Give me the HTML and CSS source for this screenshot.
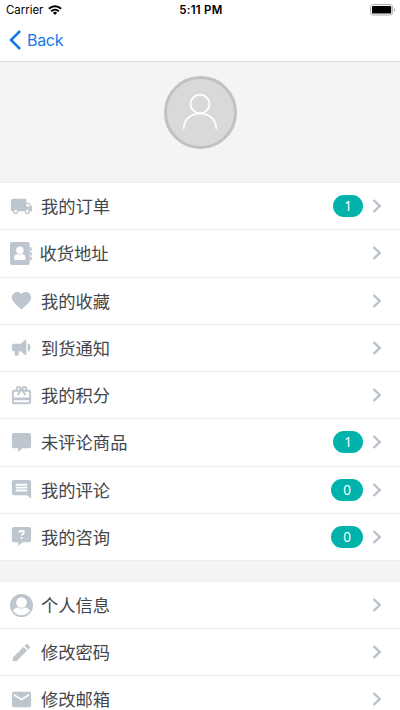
FILE: index.html
```html
<!DOCTYPE html>
<html lang="zh-CN">
<head>
<meta charset="utf-8">
<title>我的</title>
<link rel="stylesheet" href="styles.css">
</head>
<body>
<svg class="defs"><symbol id="chev" viewBox="0 0 10 14"><path d="M1.500 1 7.700 7 1.500 13" fill="none" stroke="#b8c0c9" stroke-width="2.400"/></symbol></svg>
<header>
  <div class="status">
    <div class="carrier"><span>Carrier</span>
      <svg width="14" height="10" viewBox="0 0 14 10"><g fill="none" stroke="#000" stroke-width="1.900"><path d="M.9 3.700a8.800 8.800 0 0 1 12.200 0"/><path d="M3.200 6.200a5.500 5.500 0 0 1 7.600 0"/></g><path d="M4.900 7.700a3 3 0 0 1 4.200 0L7 9.900z"/></svg>
    </div>
    <div class="time">5:11 PM</div>
    <svg class="battery" width="26" height="12" viewBox="0 0 26 12"><rect x=".6" y=".6" width="22" height="10.400" rx="2.600" fill="#fff" stroke="#aaa"/><rect x="2" y="2" width="19.200" height="7.600" rx="1.200"/><path d="M24 4.200q1.200.5 1.200 1.600T24 7.400z" fill="#999"/></svg>
  </div>
  <nav><svg width="13" height="20" viewBox="0 0 13 20"><path d="M11.100 1 2 10l9.100 9" fill="none" stroke="#147aeb" stroke-width="2.600"/></svg><span>Back</span></nav>
</header>
<section class="profile">
  <div class="avatar"><svg width="36" height="38" viewBox="0 0 36 38"><g fill="none" stroke="#fff" stroke-width="1.700"><circle cx="18" cy="11" r="9.400"/><path d="M1.800 36v-1C1.800 27 9 20.400 18 20.400s16.200 6.600 16.200 14.600v1"/></g></svg></div>
</section>
<main>
  <ul>
    <li><svg class="icon" viewBox="0 0 24 24"><path d="M20 8h-3V4H3c-1.100 0-2 .9-2 2v11h2c0 1.660 1.340 3 3 3s3-1.340 3-3h6c0 1.660 1.340 3 3 3s3-1.340 3-3h2v-5l-3-4zM6 18.500c-.83 0-1.500-.67-1.500-1.500s.67-1.500 1.500-1.500 1.500.67 1.500 1.500-.67 1.500-1.500 1.500zm13.500-9l1.960 2.500H17V9.500h2.500zm-1.500 9c-.83 0-1.500-.67-1.500-1.500s.67-1.500 1.500-1.500 1.500.67 1.500 1.500-.67 1.500-1.500 1.500z"/></svg><span class="label">我的订单</span><b class="badge one">1</b><svg class="chev"><use href="#chev"/></svg></li>
    <li><svg class="icon" viewBox="0 0 24 24"><path d="M2 0h16.500a2 2 0 0 1 2 2v20a2 2 0 0 1-2 2H2a2 2 0 0 1-2-2V2a2 2 0 0 1 2-2z"/><path d="M20.500 5.500H22q.7 0 .7.700v2q0 .8-.7.800h-1.500zM20.500 10.500H22q.7 0 .7.700v2q0 .8-.7.800h-1.500zM20.500 15.500H22q.7 0 .7.700v2q0 .8-.7.800h-1.500z"/><g fill="#fff"><circle cx="10.300" cy="8.700" r="3.900"/><path d="M4.400 18.700v-2.300c0-2.600 1.700-4 3.700-4q2.200 1.200 4.400 0c2 0 3.700 1.400 3.700 4v2.300z"/></g></svg><span class="label shift">收货地址</span><svg class="chev"><use href="#chev"/></svg></li>
    <li><svg class="icon" viewBox="0 0 24 24"><path d="M12 21.350l-1.450-1.320C5.400 15.360 2 12.280 2 8.500 2 5.420 4.420 3 7.500 3c1.740 0 3.410.81 4.500 2.090C13.090 3.810 14.760 3 16.500 3 19.580 3 22 5.420 22 8.500c0 3.780-3.400 6.860-8.550 11.540L12 21.350z"/></svg><span class="label">我的收藏</span><svg class="chev"><use href="#chev"/></svg></li>
    <li><svg class="icon" viewBox="0 0 24 24"><path d="M4 8h7l6-4.700v17.400L11 16H9v3.500q0 1-1 1H6q-1 0-1-1V16H4q-2 0-2-2v-4q0-2 2-2zM18.500 7.200q3 1.500 3 4.800t-3 4.800z"/></svg><span class="label">到货通知</span><svg class="chev"><use href="#chev"/></svg></li>
    <li><svg class="icon" viewBox="0 0 24 24"><path d="M20 6h-2.180c.11-.31.180-.65.180-1 0-1.660-1.340-3-3-3-1.050 0-1.960.54-2.500 1.350l-.5.670-.5-.680C10.960 2.540 10.050 2 9 2 7.340 2 6 3.340 6 5c0 .35.070.69.180 1H4c-1.110 0-1.990.89-1.990 2L2 19c0 1.110.89 2 2 2h16c1.110 0 2-.89 2-2V8c0-1.110-.89-2-2-2zm-5-2c.55 0 1 .45 1 1s-.45 1-1 1-1-.45-1-1 .45-1 1-1zM9 4c.55 0 1 .45 1 1s-.45 1-1 1-1-.45-1-1 .45-1 1-1zm11 15H4v-2h16v2zm0-5H4V8h5.080L7 10.830 8.620 12 11 8.760l1-1.360 1 1.360L15.380 12 17 10.830 14.920 8H20v6z"/></svg><span class="label">我的积分</span><svg class="chev"><use href="#chev"/></svg></li>
    <li><svg class="icon" viewBox="0 0 24 24"><path d="M4 2h16a2 2 0 0 1 2 2v12a2 2 0 0 1-2 2h-7l-4.500 3.800V18H4a2 2 0 0 1-2-2V4a2 2 0 0 1 2-2z"/></svg><span class="label">未评论商品</span><b class="badge one">1</b><svg class="chev"><use href="#chev"/></svg></li>
    <li><svg class="icon" viewBox="0 0 24 24"><path d="M21.990 4c0-1.100-.89-2-1.990-2H4c-1.100 0-2 .9-2 2v12c0 1.100.9 2 2 2h14l4 4-.01-18zM18 14H6v-2h12v2zm0-3H6V9h12v2zm0-3H6V6h12v2z"/></svg><span class="label">我的评论</span><b class="badge">0</b><svg class="chev"><use href="#chev"/></svg></li>
    <li><svg class="icon" viewBox="0 0 24 24"><path d="M4 2h16a2 2 0 0 1 2 2v12a2 2 0 0 1-2 2h-7l-4.500 3.800V18H4a2 2 0 0 1-2-2V4a2 2 0 0 1 2-2z"/><path d="M9.700 8q0-2 2.400-2t2.400 1.800c0 1.500-2.300 1.500-2.300 3.200" fill="none" stroke="#fff" stroke-width="1.900"/><path d="M11.200 12.500h2v2h-2z" fill="#fff"/></svg><span class="label">我的咨询</span><b class="badge">0</b><svg class="chev"><use href="#chev"/></svg></li>
  </ul>
  <ul class="account">
    <li><svg class="icon" viewBox="0 0 24 24"><circle cx="12" cy="12" r="12"/><g fill="#fff"><circle cx="12" cy="8.800" r="5.500"/><path d="M3.200 17.200q1.500-2.700 4.800-3.500 4 2.700 8 0 3.300.8 4.800 3.500A10.300 10.300 0 0 1 3.200 17.200z"/></g></svg><span class="label">个人信息</span><svg class="chev"><use href="#chev"/></svg></li>
    <li><svg class="icon" viewBox="0 0 24 24"><path d="M3 17.250V21h3.750L17.810 9.940l-3.750-3.750L3 17.250zM20.710 7.040c.39-.39.39-1.020 0-1.410l-2.340-2.340c-.39-.39-1.020-.39-1.410 0l-1.830 1.830 3.750 3.750 1.830-1.830z"/></svg><span class="label">修改密码</span><svg class="chev"><use href="#chev"/></svg></li>
    <li><svg class="icon" viewBox="0 0 24 24"><path d="M20 4H4c-1.100 0-1.990.9-1.990 2L2 18c0 1.100.9 2 2 2h16c1.100 0 2-.9 2-2V6c0-1.100-.9-2-2-2zm0 4l-8 5-8-5V6l8 5 8-5v2z"/></svg><span class="label">修改邮箱</span><svg class="chev"><use href="#chev"/></svg></li>
  </ul>
</main>
</body>
</html>
```
FILE: styles.css
```css
* { box-sizing: border-box; }
html, body { margin: 0; height: 710px; overflow: hidden; }
body { background: #f4f4f4; font-family: "Noto Sans CJK SC", sans-serif; color: #43474c; }
svg { display: block; flex: none; }
.defs { position: absolute; width: 0; height: 0; }
header { height: 62px; background: #fff; border-bottom: 1px solid #dcdcdc; font-family: Inter, sans-serif; }
.status { height: 20px; display: grid; grid-template-columns: 1fr auto 1fr; align-items: center; padding: 0 4px 0 6px; font-size: 11.5px; color: #000; }
.carrier { display: flex; align-items: center; gap: 5px; letter-spacing: -.05px; }
.time { font-weight: 600; letter-spacing: .25px; }
.battery { justify-self: end; }
nav { height: 40px; display: flex; align-items: center; gap: 5px; padding-left: 9px; color: #147aeb; font-size: 16px; letter-spacing: -.3px; }
.profile { height: 120px; padding-top: 14px; }
.avatar { width: 73px; height: 73px; margin: 0 auto; border: 3px solid #c1c1c1; border-radius: 50%; background: #d9d9d9; display: flex; justify-content: center; padding-top: 14px; }
ul { list-style: none; margin: 0; padding: 0; background: #fff; border-top: 1px solid #eee; }
li { height: 47.25px; display: flex; align-items: center; padding: 0 18px 0 10px; border-bottom: 1px solid #eee; }
.account { margin-top: 20px; }
.account li { height: 47px; }
.icon { width: 23px; height: 23px; fill: #bdc5ce; margin-right: 8px; }
.label { flex: 1; font-size: 17.3px; line-height: 24px; }
.shift { margin-left: -1.5px; }
.badge { width: 32px; height: 22px; border-radius: 11px; background: #00b3aa; color: #fff; font: 400 13.5px/22px "Noto Sans", sans-serif; text-align: center; }
.one { width: 30px; }
.chev { width: 10px; height: 14px; margin-left: 9px; }
```
